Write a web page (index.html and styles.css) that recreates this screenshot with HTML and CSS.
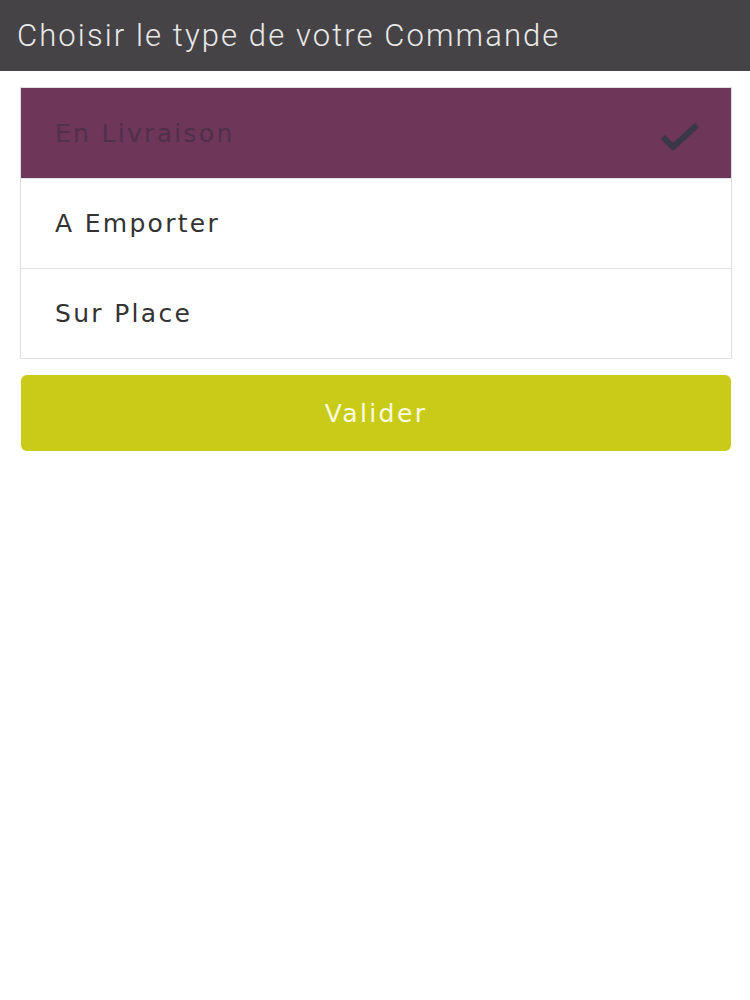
FILE: index.html
```html
<!DOCTYPE html>
<html lang="fr">
<head>
<meta charset="utf-8">
<title>Choisir le type de votre Commande</title>
<link rel="stylesheet" href="styles.css">
</head>
<body>
<header class="topbar">
  <h1 class="title">Choisir le type de votre Commande</h1>
</header>
<main class="content">
  <ul class="options">
    <li class="option selected">
      <span class="label">En Livraison</span>
      <svg class="check" viewBox="0 0 40 30" width="40" height="30" aria-hidden="true">
        <path d="M3 15 L13 25 L37 3" fill="none" stroke="#3a3848" stroke-width="6" stroke-linejoin="miter"/>
      </svg>
    </li>
    <li class="option"><span class="label">A Emporter</span></li>
    <li class="option"><span class="label">Sur Place</span></li>
  </ul>
  <button class="validate" type="button">Valider</button>
</main>
</body>
</html>
```

FILE: styles.css
```css
html, body {
  margin: 0;
  padding: 0;
  background: #ffffff;
}

body {
  font-family: "DejaVu Sans", "Liberation Sans", sans-serif;
}

.topbar {
  height: 71px;
  background: #454346;
  display: flex;
  align-items: center;
  padding-left: 17px;
  box-sizing: border-box;
}

.title {
  margin: 0;
  font-family: Roboto, "Liberation Sans", sans-serif;
  font-weight: 300;
  font-size: 31px;
  color: #e9e9e9;
  letter-spacing: 2.1px;
}

.content {
  padding: 16px 18px 0 20px;
}

.options {
  list-style: none;
  margin: 0;
  padding: 0;
  border: 1px solid #dedede;
}

.option {
  height: 90px;
  display: flex;
  align-items: center;
  justify-content: space-between;
  padding: 0 31px 0 34px;
  border-top: 1px solid #e2e2e2;
  box-sizing: border-box;
}

.option:first-child {
  border-top: none;
}

.option.selected {
  background: #6e3659;
}

.label {
  font-size: 25px;
  color: #333333;
  letter-spacing: 2.3px;
}

.option.selected .label {
  color: #4f3048;
}

.check {
  display: block;
  margin-top: 8px;
}

.validate {
  display: block;
  width: calc(100% - 2px);
  margin: 16px 1px 0;
  height: 76px;
  border: none;
  border-radius: 6px;
  background: #c8cb18;
  color: #fbfbe0;
  font-family: "DejaVu Sans", "Liberation Sans", sans-serif;
  font-size: 25px;
  font-weight: normal;
  letter-spacing: 2.4px;
}
```
